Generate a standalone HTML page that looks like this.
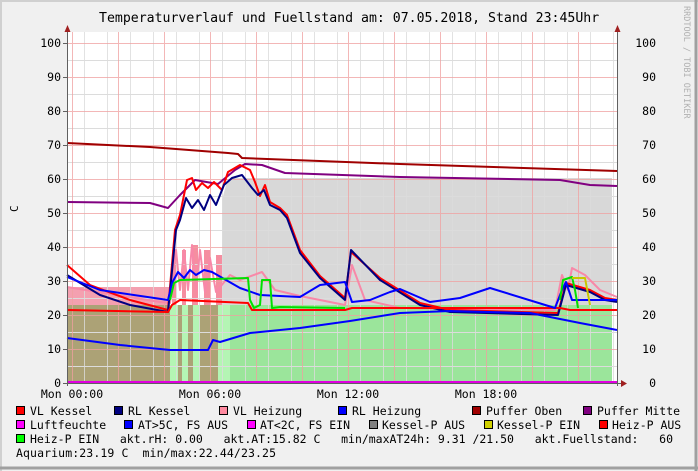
<!DOCTYPE html>
<html><head><meta charset="utf-8"><style>
html,body{margin:0;padding:0;background:#f0f0f0}
svg{display:block}
text{font-family:"DejaVu Sans Mono","Liberation Mono",monospace;fill:#000}
</style></head><body>
<svg width="698" height="471" viewBox="0 0 698 471" xmlns="http://www.w3.org/2000/svg">
<rect x="0" y="0" width="698" height="471" fill="#f0f0f0"/>
<line x1="0" y1="1" x2="698" y2="1" stroke="#d0d0d0" stroke-width="2"/>
<line x1="1" y1="0" x2="1" y2="471" stroke="#d0d0d0" stroke-width="2"/>
<line x1="696" y1="0" x2="696" y2="471" stroke="#a0a0a0" stroke-width="3"/>
<line x1="0" y1="468" x2="698" y2="468" stroke="#a0a0a0" stroke-width="3"/>
<text x="99" y="22" font-size="13.2">Temperaturverlauf und Fuellstand am: 07.05.2018, Stand 23:45Uhr</text>
<text transform="translate(684,6) rotate(90)" font-size="8.5" style="fill:#b0b0b0">RRDTOOL / TOBI OETIKER</text>
<text transform="translate(18,212) rotate(-90)" font-size="11">C</text>
<rect x="67" y="32" width="550" height="351" fill="#fff"/>
<polygon fill="#d8d8d8" points="222,383 222,200 226,185 232,178 612,178 612,383"/>
<polygon fill="#f4a0b0" points="67,383 67,287 170,287 170,383"/>
<polygon fill="#f58ea0" points="172,383 172,250 176,250 176,383 182,383 182,250 186,250 186,383 192,383 192,245 198,245 198,383 204,383 204,250 210,250 210,383 216,383 216,255 222,255 222,383"/>
<polygon fill="#9be59b" points="67,383 67,305 612,305 612,383"/>
<polygon fill="#b4f5b4" points="170,383 170,305 230,305 230,383"/>
<polygon fill="#aca276" points="67,383 67,305 170,305 170,383"/>
<polygon fill="#aca276" points="178,383 178,305 182,305 182,383 188,383 188,305 193,305 193,383 200,383 200,305 218,305 218,383"/>
<g stroke="#dcdcdc" stroke-width="1">
<path d="M67 366.5H617M67 332.5H617M67 298.5H617M67 264.5H617M67 230.5H617M67 196.5H617M67 162.5H617M67 128.5H617M67 94.5H617M67 60.5H617"/>
<path d="M84.5 32V383M107.5 32V383M130.5 32V383M153.5 32V383M176.5 32V383M199.5 32V383M222.5 32V383M245.5 32V383M268.5 32V383M291.5 32V383M314.5 32V383M337.5 32V383M360.5 32V383M383.5 32V383M406.5 32V383M429.5 32V383M452.5 32V383M475.5 32V383M498.5 32V383M521.5 32V383M544.5 32V383M567.5 32V383M590.5 32V383M613.5 32V383" opacity="0.8"/>
</g>
<g stroke="#f0a0a0" stroke-width="1" opacity="0.75">
<path d="M67 349.5H617M67 315.5H617M67 281.5H617M67 247.5H617M67 213.5H617M67 179.5H617M67 145.5H617M67 111.5H617M67 77.5H617M67 43.5H617"/>
<path d="M72.5 32V383M118.5 32V383M164.5 32V383M210.5 32V383M256.5 32V383M302.5 32V383M348.5 32V383M394.5 32V383M440.5 32V383M486.5 32V383M532.5 32V383M578.5 32V383"/>
</g>
<g fill="none" stroke-width="2" stroke-linejoin="round">
<polyline stroke="#a00000" points="67,143 150,147 228,153 238,154 242,158 400,164 617,171"/>
<polyline stroke="#800080" points="67,202 150,203 168,208 180,195 195,180 218,184 235,170 245,164 262,165 285,173 400,177 560,180 590,185 617,186"/>
<polyline stroke="#f888a8" points="67,287 160,302 170,303 176,250 180,290 184,250 188,290 192,245 196,290 200,250 205,292 210,258 216,292 230,275 240,280 262,272 275,290 300,296 345,305 352,265 365,300 400,308 555,310 562,275 568,290 572,268 585,275 600,290 617,297"/>
<polyline stroke="#ff0000" points="67,265 90,285 130,300 168,310 175,230 180,215 187,180 192,178 196,190 202,183 208,188 214,182 222,190 228,172 240,165 250,170 255,182 260,196 265,185 270,202 280,208 287,215 300,250 320,276 345,298 351,252 380,278 420,303 450,310 558,313 562,298 566,283 590,290 605,298 617,300"/>
<polyline stroke="#000080" points="67,275 100,295 130,305 168,312 176,230 180,220 186,198 192,208 198,200 204,210 210,195 216,205 224,185 232,178 242,175 252,188 258,195 264,190 270,205 280,210 287,218 300,253 320,278 345,300 351,250 380,280 420,305 450,312 558,315 562,300 566,285 590,292 605,300 617,302"/>
<polyline stroke="#ff0000" points="67,310 168,312 172,305 180,300 248,303 252,310 345,310 352,308 560,308 570,310 617,310"/>
<polyline stroke="#0000ff" points="67,277 100,290 168,300 172,283 178,272 184,278 190,270 196,275 204,270 212,272 240,288 260,295 300,297 320,285 345,282 352,302 370,300 390,292 400,289 430,302 460,298 490,288 555,308 562,290 566,282 572,300 617,300"/>
<polyline stroke="#0000ff" points="67,338 120,345 170,350 208,350 213,340 220,342 250,333 300,328 350,321 400,313 450,311 530,313 580,323 617,330"/>
<polyline stroke="#00e000" points="170,300 174,283 180,280 248,278 250,300 254,308 260,305 262,280 270,280 272,308 280,307 345,308"/>
<polyline stroke="#00e000" points="560,300 563,280 572,277 575,290 578,308"/>
<polyline stroke="#c8c800" points="572,278 585,278 590,305"/>
<line x1="67" y1="382" x2="617" y2="382" stroke="#e000e0"/>
</g>
<g stroke="#606060" stroke-width="1">
<line x1="67.5" y1="28" x2="67.5" y2="386"/>
<line x1="617.5" y1="28" x2="617.5" y2="386"/>
<line x1="63" y1="383.5" x2="621" y2="383.5"/>
<path d="M63 43.5H67M63 77.5H67M63 111.5H67M63 145.5H67M63 179.5H67M63 213.5H67M63 247.5H67M63 281.5H67M63 315.5H67M63 349.5H67"/>
</g>
<polygon fill="#a02020" points="64.5,32 70.5,32 67.5,25"/>
<polygon fill="#a02020" points="614.5,32 620.5,32 617.5,25"/>
<polygon fill="#a02020" points="621,380 621,387 627,383.5"/>
<g font-size="11.5" text-anchor="end">
<text x="61" y="47">100</text><text x="61" y="81">90</text><text x="61" y="115">80</text><text x="61" y="149">70</text><text x="61" y="183">60</text><text x="61" y="217">50</text><text x="61" y="251">40</text><text x="61" y="285">30</text><text x="61" y="319">20</text><text x="61" y="353">10</text><text x="61" y="387">0</text>
<text x="656" y="47">100</text><text x="656" y="81">90</text><text x="656" y="115">80</text><text x="656" y="149">70</text><text x="656" y="183">60</text><text x="656" y="217">50</text><text x="656" y="251">40</text><text x="656" y="285">30</text><text x="656" y="319">20</text><text x="656" y="353">10</text><text x="656" y="387">0</text>
</g>
<g font-size="11.5" text-anchor="middle">
<text x="72" y="398">Mon 00:00</text><text x="210" y="398">Mon 06:00</text><text x="348" y="398">Mon 12:00</text><text x="486" y="398">Mon 18:00</text>
</g>
<g stroke="#000" stroke-width="1">
<rect x="16.5" y="406.5" width="8" height="8" fill="#ff0000"/>
<rect x="114.5" y="406.5" width="8" height="8" fill="#000080"/>
<rect x="219.5" y="406.5" width="8" height="8" fill="#ff8aa0"/>
<rect x="338.5" y="406.5" width="8" height="8" fill="#0000ff"/>
<rect x="472.5" y="406.5" width="8" height="8" fill="#a00000"/>
<rect x="583.5" y="406.5" width="8" height="8" fill="#800080"/>
<rect x="16.5" y="420.5" width="8" height="8" fill="#ff00ff"/>
<rect x="124.5" y="420.5" width="8" height="8" fill="#0000ff"/>
<rect x="247.5" y="420.5" width="8" height="8" fill="#ff00ff"/>
<rect x="369.5" y="420.5" width="8" height="8" fill="#808080"/>
<rect x="484.5" y="420.5" width="8" height="8" fill="#d0d000"/>
<rect x="599.5" y="420.5" width="8" height="8" fill="#ff0000"/>
<rect x="16.5" y="434.5" width="8" height="8" fill="#00ff00"/>
</g>
<g font-size="11.5">
<text x="30" y="415">VL Kessel</text>
<text x="128" y="415">RL Kessel</text>
<text x="233" y="415">VL Heizung</text>
<text x="352" y="415">RL Heizung</text>
<text x="486" y="415">Puffer Oben</text>
<text x="597" y="415">Puffer Mitte</text>
<text x="30" y="429">Luftfeuchte</text>
<text x="138" y="429">AT&gt;5C, FS AUS</text>
<text x="260" y="429">AT&lt;2C, FS EIN</text>
<text x="382" y="429">Kessel-P AUS</text>
<text x="497" y="429">Kessel-P EIN</text>
<text x="612" y="429">Heiz-P AUS</text>
<text x="30" y="443" xml:space="preserve" textLength="643">Heiz-P EIN   akt.rH: 0.00   akt.AT:15.82 C   min/maxAT24h: 9.31 /21.50   akt.Fuellstand:   60</text>
<text x="16" y="457" xml:space="preserve" textLength="260">Aquarium:23.19 C  min/max:22.44/23.25</text>
</g>
</svg>
</body></html>
